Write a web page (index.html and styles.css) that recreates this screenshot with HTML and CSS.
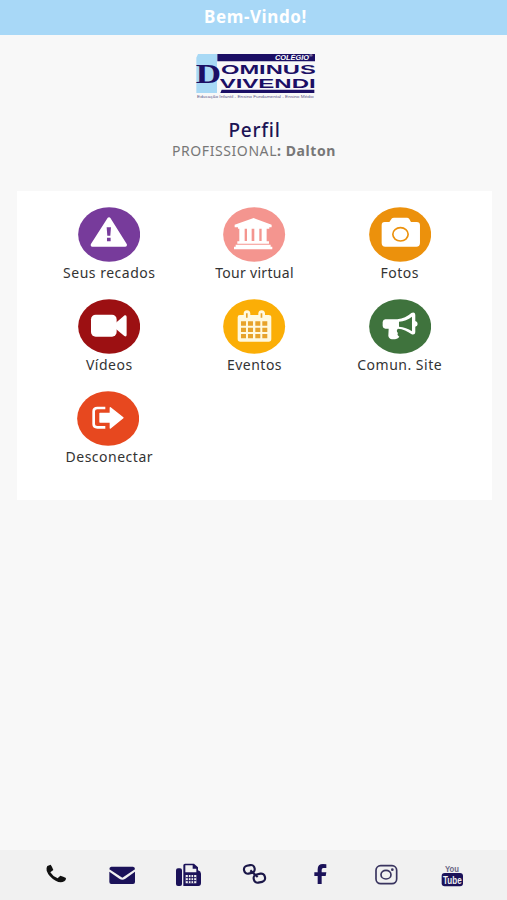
FILE: index.html
```html
<!DOCTYPE html>
<html lang="pt-BR">
<head>
<meta charset="utf-8">
<title>Perfil</title>
<link rel="stylesheet" href="styles.css">
</head>
<body>
<header class="topbar"><span>Bem-Vindo!</span></header>
<main class="content">
  <svg class="logo" viewBox="24 18 372 150" role="img" aria-label="Colégio Dominus Vivendi">
    <path fill="#a8d9f5" d="M39 27H96V144H34V38Z"/>
    <path fill="#1b0f65" d="M97 27H390V49H97Z"/>
    <path fill="#1b0f65" d="M110 134H388V144H106Z"/>
    <text class="logo-college" x="270" y="45" textLength="102" lengthAdjust="spacingAndGlyphs">COLÉGIO</text>
    <text class="logo-mark" x="373" y="36">®</text>
    <text class="logo-initial" x="32" y="113" textLength="76" lengthAdjust="spacingAndGlyphs">D</text>
    <text class="logo-word"><tspan x="108" y="86" textLength="284" lengthAdjust="spacingAndGlyphs">OMINUS</tspan><tspan x="104" y="128" textLength="288" lengthAdjust="spacingAndGlyphs">VIVENDI</tspan></text>
    <text class="logo-motto" x="36" y="158" textLength="350" lengthAdjust="spacingAndGlyphs">Educação Infantil - Ensino Fundamental - Ensino Médio</text>
  </svg>
  <h1 class="title">Perfil</h1>
  <p class="subtitle">PROFISSIONAL<b>: Dalton</b></p>
  <nav class="panel">
    <a class="tile"><svg viewBox="85 35 187 165"><ellipse cx="178.500" cy="117.500" rx="93" ry="82" fill="#773b9b"/><path fill="#fff" stroke="#fff" stroke-width="10" stroke-linejoin="round" d="M178 71L128 149H227Z"/><path fill="#773b9b" d="M171 96H184L182 121H173ZM172 127H183V138H172Z"/></svg><span>Seus recados</span></a>
    <a class="tile tour"><svg viewBox="85 35 187 165"><ellipse cx="178.500" cy="117.500" rx="93" ry="82" fill="#f4958f"/><path fill="#fff" d="M177 68L231 88V96H224V100H130V96H120V88ZM134 100H150V137H157V100H171V137H179V100H194V137H201V100H216V138H223V145H128V138H134ZM123 148H228V154H233V162H118V154H123Z"/></svg><span>Tour virtual</span></a>
    <a class="tile"><svg viewBox="85 35 187 165"><ellipse cx="178.500" cy="117.500" rx="93" ry="82" fill="#ec910c"/><path fill="#fff" d="M132 80H146L154 69Q156 67 160 67H199Q203 67 206 71L211 80H228Q238 80 238 90V143Q238 154 227 154H134Q123 154 123 143V90Q123 80 132 80Z"/><ellipse cx="179.500" cy="117" rx="23" ry="20" fill="#fff" stroke="#ec910c" stroke-width="5"/></svg><span>Fotos</span></a>
    <a class="tile"><svg viewBox="85 26 187 165"><ellipse cx="178.500" cy="108.500" rx="93" ry="82" fill="#9c1012"/><rect x="124" y="73" width="77" height="66" rx="14" fill="#fff"/><path fill="#fff" d="M198 98L225 75Q231 73 231 80V133Q231 141 224 137L198 115Z"/></svg><span>Vídeos</span></a>
    <a class="tile"><svg viewBox="85 26 187 165"><ellipse cx="178.500" cy="108.500" rx="93" ry="82" fill="#fbae06"/><path fill="#fff9df" d="M136 74H147V69Q148 60 157 60T167 69V74H191V69Q192 60 201 60T211 69V74H222Q230 74 230 81V146Q230 154 222 154H137Q129 154 129 146V81Q129 74 136 74Z"/><path fill="#e7a32b" d="M154 69H159V82H154ZM198 69H203V82H198ZM139 93H154V106H139ZM160 93H175V106H160ZM182 93H197V106H182ZM203 93H218V106H203ZM139 112H154V125H139ZM160 112H175V125H160ZM182 112H197V125H182ZM203 112H218V125H203ZM139 131H154V144H139ZM160 131H175V144H160ZM182 131H197V144H182ZM203 131H218V144H203Z"/></svg><span>Eventos</span></a>
    <a class="tile"><svg viewBox="85 26 187 165"><ellipse cx="178.500" cy="108.500" rx="93" ry="82" fill="#3f733d"/><path fill="#fff" fill-rule="evenodd" d="M134 87H170Q195 84 212 68Q223 64 224 73V92Q231 94 231 101T224 109V126Q223 135 213 132Q194 117 172 115Q165 121 172 128Q168 134 176 139Q170 148 154 147Q145 146 143 137L144 115H134Q126 114 126 107V95Q127 88 134 87ZM175 94V109Q197 111 214 123V79Q197 92 175 94Z"/></svg><span>Comun. Site</span></a>
    <a class="tile exit"><svg viewBox="82 34 187 165"><ellipse cx="175.500" cy="116.500" rx="93" ry="82" fill="#e7481f"/><path fill="none" stroke="#fff" stroke-width="8" d="M167 85H143Q132 85 132 95V133Q132 143 143 143H167"/><path fill="#fff" stroke="#fff" stroke-width="4" stroke-linejoin="round" d="M151 101H182V84L220 114L182 145V127H151Z"/></svg><span>Desconectar</span></a>
  </nav>
</main>
<footer class="footer">
  <svg viewBox="-21 15 198 150"><path fill="#111" d="M52 63L62 59Q67 66 70 75L61 82Q68 94 83 100L91 92Q100 95 108 99Q108 107 103 109Q91 115 77 107Q56 95 50 77Q48 69 52 63Z"/></svg>
  <svg viewBox="177 15 198 150"><path fill="#1b1259" d="M244 65H309Q315 66 315 73L277 98L238 73Q238 66 244 65ZM238 80L268 101Q277 107 286 101L315 80V111Q315 117 309 117H244Q238 117 238 111Z"/></svg>
  <svg viewBox="375 15 198 150"><rect x="438" y="70" width="18" height="53" rx="6" fill="#1b1259"/><path fill="#1b1259" d="M460 61Q460 56 465 56H492L504 67V76Q513 79 513 86V114Q513 123 505 123H460Z"/><path fill="#f1f1f1" d="M466 61H488V71H499V82H466ZM467 90H499V115H467Z"/><path stroke="#1b1259" stroke-width="3" d="M475 90V115M483 90V115M491 90V115M467 98H499M467 107H499"/></svg>
  <svg viewBox="573 15 198 150"><g fill="none" stroke="#1b1748" stroke-width="6.500"><rect x="642" y="61" width="32" height="24" rx="11" transform="rotate(-12 658 73)"/><rect x="671" y="87" width="34" height="25" rx="11" transform="rotate(-12 688 99)"/><path d="M661 76L683 96"/></g></svg>
  <svg viewBox="156 15 198 150"><path fill="#1b1259" d="M274 58V69H265Q260 69 260 75V82H274L272 93H260V117H248V93H238V82H248V73Q248 57 264 57Z"/></svg>
  <svg viewBox="354 15 198 150"><g fill="none" stroke="#39345f" stroke-width="5"><rect x="423" y="62" width="62" height="54" rx="14"/><ellipse cx="453" cy="89" rx="15" ry="13"/></g><circle cx="472" cy="74" r="4" fill="#39345f"/></svg>
  <svg viewBox="552 15 198 150"><rect x="620" y="84" width="64" height="40" rx="9" fill="#1b1259"/><text class="yt-you" x="630" y="80" textLength="42" lengthAdjust="spacingAndGlyphs">You</text><text class="yt-tube" x="624" y="116" textLength="56" lengthAdjust="spacingAndGlyphs">Tube</text></svg>
</footer>
</body>
</html>
```
FILE: styles.css
```css
* { box-sizing: border-box; }
body {
  margin: 0;
  height: 900px;
  display: flex;
  flex-direction: column;
  background: #f8f8f8;
  font-family: "Noto Sans", "Open Sans", sans-serif;
  overflow: hidden;
}
.topbar {
  height: 35px;
  flex: none;
  background: #a8d8f7;
  color: #fff;
  font-size: 17px;
  font-weight: 700;
  line-height: 34px;
  letter-spacing: 0.6px;
  text-align: center;
  padding-left: 4px;
}
.content {
  flex: 1;
  display: flex;
  flex-direction: column;
  align-items: center;
}
.logo { width: 124px; height: 50px; margin: 16px 0 0 2px; display: block; }
.logo text { fill: #1b0f65; font-family: "Liberation Sans", sans-serif; font-weight: 700; }
.logo .logo-college { fill: #fff; font-size: 22px; font-style: italic; }
.logo .logo-mark { fill: #fff; font-size: 13px; }
.logo .logo-initial { font-family: "Liberation Serif", serif; font-size: 80px; }
.logo .logo-word { font-size: 41px; }
.logo .logo-motto { font-size: 12px; font-weight: 400; fill: #5b5789; }
.title {
  margin: 17px 0 0 2px;
  font-size: 19px;
  line-height: 24px;
  font-weight: 500;
  letter-spacing: 0.75px;
  color: #1c1455;
}
.subtitle {
  margin: 0 0 0 1px;
  font-size: 14px;
  line-height: 17px;
  letter-spacing: 0.58px;
  color: #777;
}
.panel {
  width: 475px;
  height: 309px;
  margin: 32px 0 0 2px;
  padding: 15.700px 19.700px;
  display: grid;
  grid-template-columns: repeat(3, 1fr);
  grid-auto-rows: 92.200px;
  align-content: start;
  background: #fff;
}
.tile {
  display: flex;
  flex-direction: column;
  align-items: center;
  color: #333;
  font-size: 14px;
  line-height: 22px;
  letter-spacing: 0.5px;
}
.tour { letter-spacing: 0.3px; }
.tile svg { width: 62.300px; height: 55px; display: block; }
.exit svg { margin-left: -2px; }
.footer {
  height: 50px;
  flex: none;
  padding-left: 23px;
  display: flex;
  background: #f1f1f1;
}
.footer svg { width: 66px; height: 50px; display: block; }
.yt-you { font: 700 27px "Liberation Sans", sans-serif; fill: #6a6785; }
.yt-tube { font: 700 31px "Liberation Sans", sans-serif; fill: #f1f1f1; }
```
